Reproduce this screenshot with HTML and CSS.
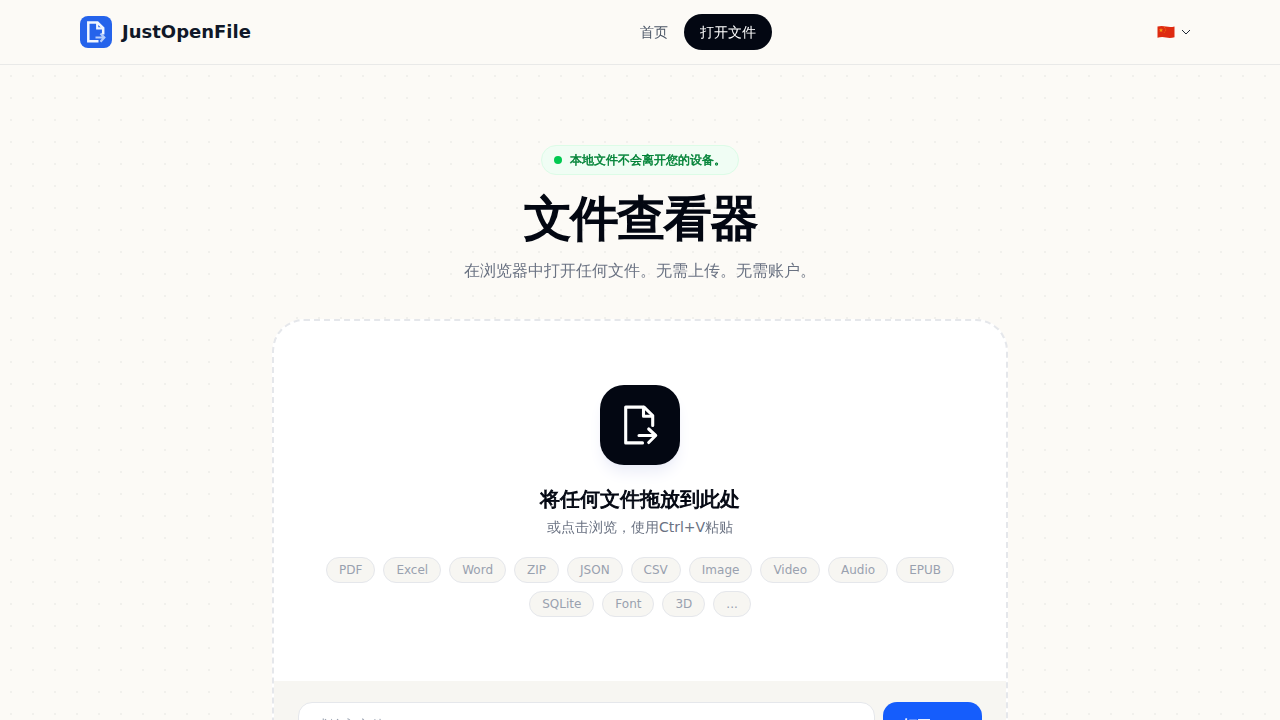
FILE: index.html
```html
<!DOCTYPE html>
<html lang="zh-CN">
<head>
<meta charset="utf-8">
<title>JustOpenFile</title>
<link rel="stylesheet" href="styles.css">
</head>
<body>
<header class="header">
  <div class="header-inner">
    <a class="brand">
      <span class="brand-icon">
        <svg width="32" height="32" viewBox="0 0 32 32" fill="none" stroke="#f1f6ff" stroke-width="2.5"><path d="M18.500 25.300H8.300V6.500H17.500L23.200 12V18.500"/><path d="M17.200 6.500V12.400H23.200" stroke-width="2.200"/><path d="M15.500 21.500H24.500M20.500 17.500L24.300 21.500L20.500 25.700" stroke="#b4ccfb" stroke-width="2.200"/></svg>
      </span>
      <span class="brand-name">JustOpenFile</span>
    </a>
    <nav class="nav">
      <a class="nav-link">首页</a>
      <a class="nav-link active">打开文件</a>
    </nav>
    <button class="language">
      <svg width="18" height="14" viewBox="0 0 18 14"><path d="M.5 1.500Q4.500.6 9 1.500T17.500 1.400V12.200Q13.500 13.400 9 12.500T.5 12.800Z" fill="#de2a10"/><path d="M4 3l.6 1.400 1.500.1-1.100 1 .3 1.500L4 6.200 2.700 7 3 5.500 1.900 4.500 3.400 4.400Z" fill="#f59a12"/><path d="M7 2.600h1M8.200 4h1M8.100 5.700h1M6.800 7.200h1" stroke="#f07a10" stroke-width=".8"/></svg>
      <svg width="12" height="12" viewBox="0 0 12 12" fill="none" stroke="#202735"><path d="M2 4L6 8L10 4"/></svg>
    </button>
  </div>
</header>
<main class="page">
  <div class="badge"><span class="dot"></span>本地文件不会离开您的设备。</div>
  <h1 class="title">文件查看器</h1>
  <p class="subtitle">在浏览器中打开任何文件。无需上传。无需账户。</p>
  <section class="card">
    <div class="drop">
      <div class="drop-icon">
        <svg width="40" height="40" viewBox="0 0 40 40" fill="none" stroke="#fff" stroke-width="3.100" stroke-linecap="round" stroke-linejoin="round"><path d="M22.500 37.900H5.700V2.100H24L32.700 10.500V20.500"/><path d="M23.500 2.200V11.300H32.300"/><path d="M19 30.500H35.700M28.700 24L35.700 30.500L28.700 37.500"/></svg>
      </div>
      <h2 class="drop-title">将任何文件拖放到此处</h2>
      <p class="drop-hint">或点击浏览，使用Ctrl+V粘贴</p>
      <div class="formats">
        <span class="chip">PDF</span><span class="chip">Excel</span><span class="chip">Word</span><span class="chip">ZIP</span><span class="chip">JSON</span><span class="chip">CSV</span><span class="chip">Image</span><span class="chip">Video</span><span class="chip">Audio</span><span class="chip">EPUB</span><span class="chip">SQLite</span><span class="chip">Font</span><span class="chip">3D</span><span class="chip">...</span>
      </div>
    </div>
    <div class="url-bar">
      <input class="url-input" placeholder="或输入文件URL">
      <button class="url-button"><span class="url-button-verb">打开</span>URL</button>
    </div>
  </section>
</main>
</body>
</html>
```
FILE: styles.css
```css
* { box-sizing: border-box; margin: 0; }
body {
  height: 720px;
  overflow: hidden;
  background: #fcfaf6;
  color: #030712;
  font-family: "DejaVu Sans", "WenQuanYi Zen Hei", "Droid Sans Fallback", "Noto Sans CJK SC", sans-serif;
}
button, input { font-family: inherit; }
.header { height: 65px; border-bottom: 1px solid #e9e9e8; }
.header-inner {
  display: grid;
  grid-template-columns: 544px auto 1fr;
  align-items: center;
  height: 64px;
  padding: 0 88px 0 80px;
}
.brand { display: flex; align-items: center; gap: 10px; }
.brand-icon { display: flex; width: 32px; height: 32px; border-radius: 8px; background: #2563eb; }
.brand-name { font-size: 18px; line-height: 28px; font-weight: 700; color: #101828; }
.nav { display: flex; }
.nav-link { padding: 8px 16px; border-radius: 18px; font-size: 14px; line-height: 20px; color: #4a5565; }
.nav-link.active { background: #030712; color: #fff; }
.language {
  display: flex;
  align-items: center;
  justify-self: end;
  gap: 5px;
  padding: 0;
  border: 0;
  background: none;
}
.page {
  display: flex;
  flex-direction: column;
  align-items: center;
  height: 655px;
  overflow: hidden;
  padding-top: 80px;
  background: radial-gradient(circle, #f1f0ec 1px, transparent 1px) 0 0 / 22px 22px;
}
.badge {
  flex: none;
  display: flex;
  align-items: center;
  gap: 8px;
  width: 198px;
  height: 30px;
  padding: 0 0 0 12px;
  border: 1px solid #dcfce7;
  border-radius: 15px;
  background: #f0fdf4;
  color: #008236;
  font-size: 12px;
  line-height: 16px;
  font-weight: 600;
  -webkit-text-stroke: 0.48px;
  white-space: nowrap;
}
.dot { flex: none; width: 8px; height: 8px; border-radius: 50%; background: #00c950; }
.title { margin-top: 19px; padding-left: 1px; font-size: 48px; line-height: 48px; font-weight: 700; letter-spacing: -1.4px; -webkit-text-stroke: 1.9px; }
.subtitle { margin-top: 17px; color: #6a7282; font-size: 16px; line-height: 24px; }
.card {
  flex: none;
  width: 736px;
  margin-top: 36px;
  border: 2px dashed #e5e7eb;
  border-radius: 32px;
  background: #fff;
  overflow: hidden;
}
.drop { display: flex; flex-direction: column; align-items: center; height: 360px; padding: 64px 32px; }
.drop-icon {
  display: flex;
  align-items: center;
  justify-content: center;
  width: 80px;
  height: 80px;
  border-radius: 24px;
  background: #030712;
  box-shadow: 0 10px 15px -3px #ebedf8, 0 4px 6px -4px #ebedf8;
}
.drop-title { margin-top: 20px; font-size: 20px; line-height: 28px; font-weight: 700; -webkit-text-stroke: 0.9px; }
.drop-hint { margin-top: 4px; color: #6a7282; font-size: 14px; line-height: 20px; }
.formats { display: flex; flex-wrap: wrap; justify-content: center; gap: 8px; width: 672px; margin-top: 20px; }
.chip {
  padding: 4px 12px;
  border: 1px solid #e5e7eb;
  border-radius: 13px;
  background: #f7f6f2;
  color: #99a1af;
  font-size: 12px;
  line-height: 16px;
}
.url-bar { display: flex; gap: 8px; padding: 21px 24px; background: #f7f6f2; }
.url-input {
  flex: 1;
  min-width: 0;
  height: 46px;
  padding: 0 16px;
  border: 1px solid #e5e7eb;
  border-radius: 14px;
  background: #fff;
  font-size: 14px;
}
.url-input::placeholder { color: #99a1af; }
.url-button {
  width: 99px;
  height: 46px;
  padding: 2px 0 0;
  border: 0;
  border-radius: 14px;
  background: #155dfc;
  color: #fff;
  font-size: 14px;
  font-weight: 600;
}
.url-button-verb { -webkit-text-stroke: 0.55px; }
```
